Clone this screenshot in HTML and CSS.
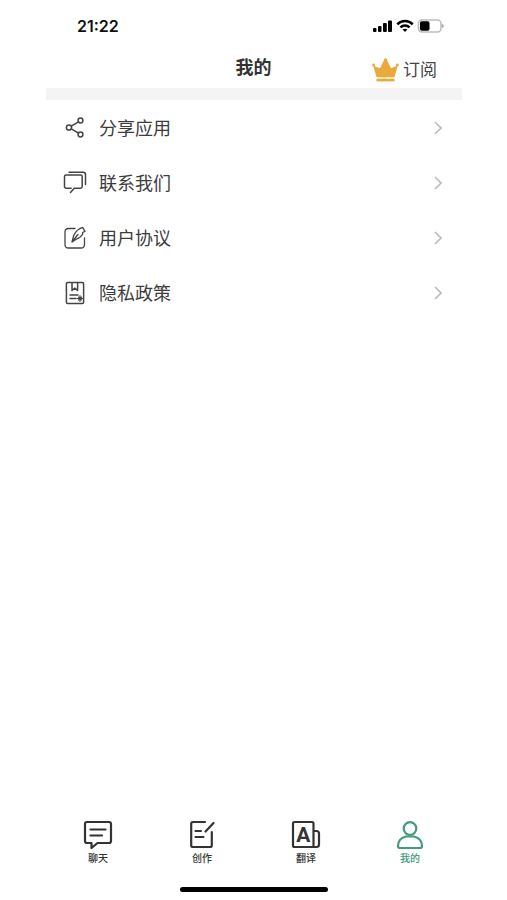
FILE: index.html
```html
<!DOCTYPE html>
<html lang="zh-CN">
<head>
<meta charset="utf-8">
<meta name="viewport" content="width=device-width, initial-scale=1">
<title>我的</title>
<link rel="stylesheet" href="styles.css">
</head>
<body>
<div class="app">
  <div class="status">
    <span class="time">21:22</span>
    <svg class="status-icons" width="72" height="14" viewBox="0 0 72 14" aria-hidden="true">
      <rect x="1" y="9" width="3.500" height="4" rx="1"/>
      <rect x="6" y="7" width="3.500" height="6" rx="1"/>
      <rect x="11" y="4" width="3.800" height="9" rx="1"/>
      <rect x="16" y="1.500" width="4" height="11.500" rx="1"/>
      <g fill="none" stroke="#000" stroke-width="2.4">
        <path d="M25.300 5.300C29.500 .9 36.500 .9 40.700 5.300"/>
        <path d="M28.400 8.400c2.600-2.600 6.600-2.600 9.200 0"/>
      </g>
      <path d="M30.600 10.600c1.400-1.200 3.400-1.200 4.800 0L33 13z"/>
      <rect x="46.500" y="1" width="22.500" height="12" rx="3.500" fill="#fff" stroke="#bdbdbd" stroke-width="1.6"/>
      <rect x="48" y="2.300" width="9.500" height="9.400" rx="1.800"/>
      <path d="M70 5c2.300.6 2.300 3.400 0 4z" fill="#aaa"/>
    </svg>
  </div>
  <header class="header">
    <h1>我的</h1>
    <button class="subscribe" type="button">
      <svg width="27" height="24" viewBox="0 0 27 24" aria-hidden="true">
        <g fill="#e9a93c">
          <path d="M4.500 19 1.200 7.400l6.800 2.800L12.300 1.500h2.400L19 10.200l6.800-2.800L22.500 19z"/>
          <circle cx="1.600" cy="7" r="1.400"/><circle cx="13.500" cy="1.900" r="1.700"/><circle cx="25.400" cy="7" r="1.400"/>
          <rect x="4.500" y="20.800" width="18" height="2.600"/>
        </g>
        <rect x="4.600" y="19" width="17.800" height="1.800" fill="#fbe3b0"/>
      </svg>
      <span>订阅</span>
    </button>
  </header>
  <main>
    <nav class="menu" aria-label="设置">
      <a href="#share">
        <svg class="icon" viewBox="0 0 24 24" aria-hidden="true"><circle cx="6" cy="11.500" r="2.600"/><circle cx="17.500" cy="4.500" r="2.400"/><circle cx="17.500" cy="18.500" r="2.400"/><path d="m8.300 10.200 7.200-4.400M8.300 12.800l7.200 4.400"/></svg>
        <span>分享应用</span>
        <svg class="chevron" viewBox="0 0 8 14" aria-hidden="true"><path d="m1 1 6 6-6 6"/></svg>
      </a>
      <a href="#contact">
        <svg class="icon" viewBox="0 0 24 24" aria-hidden="true"><path d="M3.200 4h14.300q1.700 0 1.700 1.700v9.800q0 1.700-1.700 1.700h-6.200L7.500 21.500M8.200 17.200h-5q-1.700 0-1.700-1.700V5.700Q1.500 4 3.200 4M6 1.300h14.200q2.300 0 2.300 2.300v10"/></svg>
        <span>联系我们</span>
        <svg class="chevron" viewBox="0 0 8 14" aria-hidden="true"><path d="m1 1 6 6-6 6"/></svg>
      </a>
      <a href="#terms">
        <svg class="icon thin" viewBox="0 0 24 24" aria-hidden="true"><path d="M12 2.500H5.500Q2 2.500 2 6v12.500Q2 22 5.500 22H18q3.500 0 3.500-3.500V12M9 16l1.700-6.500Q13.500 3.200 19.600 1.300l2.400 4-2.400 1.200.1 1.900q-2.300 3.300-6.400 4.800zM9 16l6-7.500"/></svg>
        <span>用户协议</span>
        <svg class="chevron" viewBox="0 0 8 14" aria-hidden="true"><path d="m1 1 6 6-6 6"/></svg>
      </a>
      <a href="#privacy">
        <svg class="icon" viewBox="0 0 24 24" aria-hidden="true"><path d="M4.600 1.500h14.800q1.200 0 1.200 1.200v18.600q0 1.200-1.200 1.200H4.600q-1.200 0-1.200-1.200V2.700q0-1.200 1.200-1.200M9 2v7.500l2.800-2.300 2.800 2.300V2M7 14h8M7 17.500h6"/><path d="M17 14.500v6M14 17.500h6M15.500 16l3 3M18.500 16l-3 3" stroke-width="1.100"/></svg>
        <span>隐私政策</span>
        <svg class="chevron" viewBox="0 0 8 14" aria-hidden="true"><path d="m1 1 6 6-6 6"/></svg>
      </a>
    </nav>
  </main>
  <nav class="tabs" aria-label="主导航">
    <a href="#chat">
      <svg viewBox="0 0 30 30" aria-hidden="true"><path d="M4 2h22q2 0 2 2v17q0 2-2 2H14.500L8.500 28v-5H4q-2 0-2-2V4q0-2 2-2zM7.500 9.500h15M7.500 15.500h11.500"/></svg>
      <span>聊天</span>
    </a>
    <a href="#create">
      <svg viewBox="0 0 30 30" aria-hidden="true"><path d="M18 2H6Q4.200 2 4.200 3.800v21.400Q4.200 27 6 27h17q1.800 0 1.800-1.800V12M18.500 11.500 26.500 3M8.500 11h5.500M8.500 17h8"/></svg>
      <span>创作</span>
    </a>
    <a href="#translate">
      <svg viewBox="0 0 30 30" aria-hidden="true"><path d="M3.500 2h17.500Q22.500 2 22.500 3.500V27h-19Q2 27 2 25.500v-22Q2 2 3.500 2zM22.500 11h3q2.500 0 2.500 2.500v11Q28 27 25.500 27h-3"/><text class="letter" x="12.200" y="22" text-anchor="middle">A</text></svg>
      <span>翻译</span>
    </a>
    <a class="active" href="#me" aria-current="page">
      <svg viewBox="0 0 30 30" aria-hidden="true"><circle cx="15" cy="8.500" r="6.300"/><path d="M11 16.500h8q8 2 8 9.500 0 2-2 2H5q-2 0-2-2 0-7.500 8-9.500z"/></svg>
      <span>我的</span>
    </a>
  </nav>
  <div class="home"></div>
</div>
</body>
</html>
```
FILE: styles.css
```css
* { box-sizing: border-box; }

body {
  margin: 0;
  background: #fff;
  color: #333;
  font-family: "Liberation Sans", "Noto Sans CJK SC", sans-serif;
}

.app {
  display: flex;
  flex-direction: column;
  min-height: 100vh;
  padding: 0 45px 0 46px;
}

.status {
  display: flex;
  align-items: center;
  justify-content: space-between;
  height: 48px;
  padding: 4px 18px 0 31px;
}

.time {
  color: #111;
  font: 600 16px/20px Inter, sans-serif;
}

.header {
  display: grid;
  grid-template-columns: 1fr auto 1fr;
  align-items: center;
  height: 40px;
  padding: 0 25px 0 24px;
}

h1 {
  grid-column: 2;
  margin: 0;
  font-size: 18px;
  font-weight: 700;
  line-height: 24px;
}

.subscribe {
  display: flex;
  align-items: center;
  justify-self: end;
  gap: 4px;
  padding: 6px 0 0;
  border: 0;
  background: none;
  color: #444;
  font: inherit;
  font-size: 17px;
  line-height: 24px;
}

.subscribe svg { margin-bottom: 2px; }

main {
  flex: 1;
  border-top: 12px solid #f4f4f4;
}

.menu a {
  display: flex;
  align-items: center;
  gap: 12px;
  height: 55px;
  padding: 0 20px 0 17px;
  color: #3c3c3c;
  font-size: 18px;
  line-height: 24px;
  text-decoration: none;
}

.menu span { padding-top: 2px; }

.icon {
  width: 24px;
  height: 24px;
  fill: none;
  stroke: #444;
  stroke-width: 1.5;
  stroke-linecap: round;
  stroke-linejoin: round;
}

.thin { stroke-width: 1.3; }

.chevron {
  width: 8px;
  height: 14px;
  margin-left: auto;
  fill: none;
  stroke: #bbb;
  stroke-width: 1.6;
}

.tabs { display: flex; }

.tabs a {
  display: flex;
  flex: 1;
  flex-direction: column;
  align-items: center;
  gap: 2px;
  color: #333;
  font-size: 10px;
  font-weight: 500;
  line-height: 14px;
  text-decoration: none;
}

.tabs svg {
  width: 30px;
  height: 30px;
  fill: none;
  stroke: currentColor;
  stroke-width: 2.2;
  stroke-linecap: round;
  stroke-linejoin: round;
}

.tabs .letter {
  fill: currentColor;
  stroke: none;
  font: 700 21px Roboto, sans-serif;
}

.tabs .active { color: #429b79; }

.home {
  align-self: center;
  width: 148px;
  height: 5px;
  margin: 21px 0 8px;
  border-radius: 3px;
  background: #000;
}
```
